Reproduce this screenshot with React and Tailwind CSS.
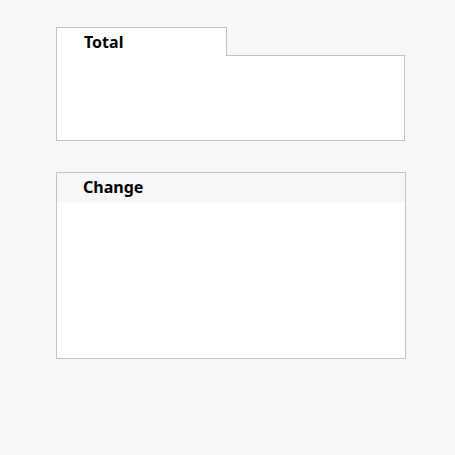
export default function App() {
  const font = { fontFamily: '"Noto Sans", "Open Sans", sans-serif' };
  return (
    <div className="min-h-screen w-full bg-[#f7f7f7] pt-[27px] pl-[56px]" style={font}>
      <div className="w-[349px]">
        <div className="relative z-10 -mb-px h-[29px] w-[171px] border border-b-0 border-[#c2c2c2] bg-white pl-[27px]">
          <span className="block text-[16px] font-bold leading-[28px] text-black">Total</span>
        </div>
        <div className="h-[86px] border border-[#c2c2c2] bg-white" />
      </div>
      <div className="mt-[31px] flex h-[187px] w-[350px] flex-col border border-[#c2c2c2] bg-white">
        <div className="h-[29px] bg-[#f7f7f7] pl-[26px]">
          <span className="block text-[16px] font-bold leading-[28px] text-black">Change</span>
        </div>
        <div className="flex-1 bg-white" />
      </div>
    </div>
  );
}
